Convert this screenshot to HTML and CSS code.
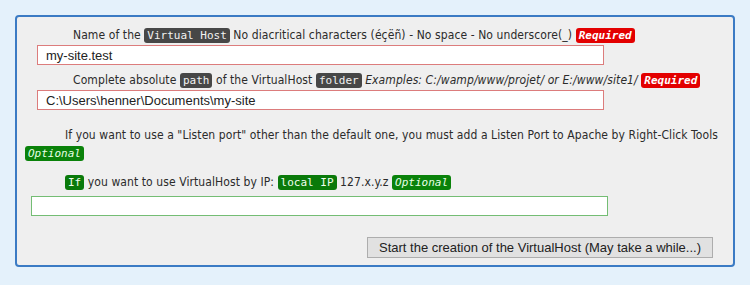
FILE: index.html
```html
<!DOCTYPE html>
<html lang="en">
<head>
    <meta charset="UTF-8">
    <meta name="viewport" content="width=device-width, initial-scale=1.0">
    <title>Add a VirtualHost</title>
    <link rel="stylesheet" href="styles.css">
</head>
<body>
    <form class="vhost-panel">
        <p class="field-label label-name">Name of the <code class="tag tag-dark">Virtual Host</code> No diacritical characters (éçëñ) - No space - No underscore(_) <code class="tag tag-required">Required</code></p>
        <input type="text" class="field field-required" value="my-site.test">

        <p class="field-label label-name">Complete absolute <code class="tag tag-dark">path</code> of the VirtualHost <code class="tag tag-dark">folder</code> <em>Examples: C:/wamp/www/projet/ or E:/www/site1/</em> <code class="tag tag-required">Required</code></p>
        <input type="text" class="field field-required" value="C:\Users\henner\Documents\my-site">

        <p class="field-label label-port">If you want to use a "Listen port" other than the default one, you must add a Listen Port to Apache by Right-Click Tools <code class="tag tag-optional">Optional</code></p>

        <p class="field-label label-ip"><code class="tag tag-green">If</code> you want to use VirtualHost by IP: <code class="tag tag-green">local IP</code> 127.x.y.z <code class="tag tag-optional">Optional</code></p>
        <input type="text" class="field field-optional">

        <div class="actions">
            <button type="submit">Start the creation of the VirtualHost (May take a while...)</button>
        </div>
    </form>
</body>
</html>
```
FILE: styles.css
```css
body {
    margin: 0;
    padding: 15px 15px 0 15px;
    background-color: #e4f1fb;
    font-family: "DejaVu Sans Condensed", "DejaVu Sans", sans-serif;
    font-size: 12px;
    color: #2b2b2b;
}

.vhost-panel {
    background-color: #efefef;
    border: 2px solid #3b7bc4;
    border-radius: 4px;
    padding: 9px 8px 7px 8px;
}

.field-label {
    margin: 0 0 1px 0;
    line-height: 18px;
    letter-spacing: 0.09px;
}

.label-name {
    text-indent: 48px;
}

.label-port {
    text-indent: 40px;
    margin-top: 16px;
}

.label-ip {
    text-indent: 40px;
    margin-top: 11px;
    margin-bottom: 5px;
}

.tag {
    font-family: "DejaVu Sans Mono", monospace;
    font-size: 11px;
    line-height: 13px;
    letter-spacing: 0;
    padding: 1px 3px;
    border-radius: 3px;
}

.tag-dark {
    background-color: #474747;
    color: #f2f2f2;
}

.tag-required {
    background-color: #e30000;
    color: #fff;
    font-weight: bold;
    font-style: italic;
}

.tag-optional {
    background-color: #0a820a;
    color: #e6ffe6;
    font-style: italic;
}

.tag-green {
    background-color: #0a7a0a;
    color: #f0fff0;
}

.field {
    display: block;
    box-sizing: border-box;
    height: 20px;
    margin: 0 0 6px 12px;
    padding: 0 8px;
    width: 567px;
    background-color: #fff;
    border: 1px solid #dc7c7c;
    font-family: "Liberation Sans", Arial, sans-serif;
    font-size: 13px;
    color: #222;
    outline: none;
}

.field-optional {
    margin-left: 6px;
    width: 577px;
    border-color: #74bd74;
}

.actions {
    display: flex;
    justify-content: flex-end;
    padding: 15px 12px 0 0;
}

button {
    height: 21px;
    padding: 0 11px;
    background-color: #e1e1e1;
    border: 1px solid #adadad;
    border-radius: 0;
    font-family: "Liberation Sans", Arial, sans-serif;
    font-size: 13px;
    color: #222;
    cursor: pointer;
}
```
